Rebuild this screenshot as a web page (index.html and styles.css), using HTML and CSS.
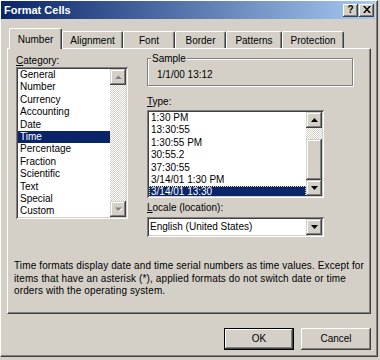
FILE: index.html
```html
<!DOCTYPE html>
<html>
<head>
<meta charset="utf-8">
<title>Format Cells</title>
<link rel="stylesheet" href="styles.css">
</head>
<body>
<div class="window">
  <div class="titlebar">
    <span class="title">Format Cells</span>
    <div class="cbtns">
      <span class="cbtn help">?</span>
      <span class="cbtn close">
        <svg width="8" height="7" viewBox="0 0 8 7"><path d="M0 0h2l2 2.5L6 0h2L5 3.5 8 7H6L4 4.5 2 7H0l3-3.5z" fill="#000"/></svg>
      </span>
    </div>
  </div>
  <div class="content">
    <div class="tabs">
      <div class="tab active t-number">Number</div>
      <div class="tab t-align">Alignment</div>
      <div class="tab t-font">Font</div>
      <div class="tab t-border">Border</div>
      <div class="tab t-patterns">Patterns</div>
      <div class="tab t-protection">Protection</div>
    </div>
    <div class="panel">
      <div class="cols">
        <div class="col-left">
          <div class="label"><u>C</u>ategory:</div>
          <div class="listbox cat-list">
            <div class="items">
              <div class="item">General</div>
              <div class="item">Number</div>
              <div class="item">Currency</div>
              <div class="item">Accounting</div>
              <div class="item">Date</div>
              <div class="item selected">Time</div>
              <div class="item">Percentage</div>
              <div class="item">Fraction</div>
              <div class="item">Scientific</div>
              <div class="item">Text</div>
              <div class="item">Special</div>
              <div class="item">Custom</div>
            </div>
            <div class="vscroll">
              <div class="sbtn">
                <svg width="7" height="5" viewBox="0 0 7 5"><polygon points="1,4 4,1 7,4" fill="#fff"/><polygon points="0,4 3.5,0.5 7,4" fill="#808080"/></svg>
              </div>
              <div class="track"></div>
              <div class="sbtn">
                <svg width="7" height="5" viewBox="0 0 7 5"><polygon points="1,1 8,1 4.5,4.5" fill="#fff"/><polygon points="0,0.5 7,0.5 3.5,4" fill="#808080"/></svg>
              </div>
            </div>
          </div>
        </div>
        <div class="col-right">
          <div class="group">
            <div class="legend">Sample</div>
            <div class="sample-val">1/1/00 13:12</div>
          </div>
          <div class="label type-label"><u>T</u>ype:</div>
          <div class="listbox type-list">
            <div class="items">
              <div class="item">1:30 PM</div>
              <div class="item">13:30:55</div>
              <div class="item">1:30:55 PM</div>
              <div class="item">30:55.2</div>
              <div class="item">37:30:55</div>
              <div class="item">3/14/01 1:30 PM</div>
              <div class="item selected focus">3/14/01 13:30</div>
            </div>
            <div class="vscroll">
              <div class="sbtn">
                <svg width="7" height="4" viewBox="0 0 7 4"><polygon points="0,4 3.5,0 7,4" fill="#000"/></svg>
              </div>
              <div class="track short"></div>
              <div class="thumb"></div>
              <div class="sbtn">
                <svg width="7" height="4" viewBox="0 0 7 4"><polygon points="0,0 7,0 3.5,4" fill="#000"/></svg>
              </div>
            </div>
          </div>
          <div class="label locale-label"><u>L</u>ocale (location):</div>
          <div class="combo">
            <div class="combo-text">English (United States)</div>
            <div class="sbtn">
              <svg width="7" height="4" viewBox="0 0 7 4"><polygon points="0,0 7,0 3.5,4" fill="#000"/></svg>
            </div>
          </div>
        </div>
      </div>
      <p class="desc">Time formats display date and time serial numbers as time values. Except for items that have an asterisk (*), applied formats do not switch date or time orders with the operating system.</p>
    </div>
    <div class="buttons">
      <div class="btn default">OK</div>
      <div class="btn">Cancel</div>
    </div>
  </div>
</div>
</body>
</html>
```

FILE: styles.css
```css
* { box-sizing: border-box; }
html, body { margin: 0; padding: 0; background: #d4d0c8; }
body {
  width: 380px;
  height: 360px;
  overflow: hidden;
  font-family: "Liberation Sans", Arial, sans-serif;
  font-size: 10px;
  color: #000;
}
.window {
  width: 378px;
  height: 357px;
  border-top: 1px solid #fff;
  border-left: 1px solid #fff;
  border-right: 1px solid #404040;
  border-bottom: 1px solid #404040;
  box-shadow: inset -1px -1px #808080;
  padding: 0 2px 2px 0;
  display: flex;
  flex-direction: column;
}
.titlebar {
  height: 18px;
  flex: none;
  background: linear-gradient(to right, #0a246a, #a6caf0);
  display: flex;
  align-items: center;
  justify-content: space-between;
  padding: 0 1px 0 3px;
}
.title { color: #fff; font-weight: bold; font-size: 11px; }
.cbtns { display: flex; gap: 1px; }
.cbtn {
  width: 15px;
  height: 13px;
  background: #d4d0c8;
  box-shadow: inset -1px -1px #404040, inset 1px 1px #fff, inset -2px -2px #808080;
  display: flex;
  align-items: center;
  justify-content: center;
}
.cbtn.help { font-weight: bold; font-size: 10px; line-height: 13px; padding-bottom: 1px; }
.cbtn.close svg { display: block; margin-bottom: 1px; }

.content {
  flex: 1;
  padding: 9px 4px 0 6px;
}
.tabs {
  display: flex;
  align-items: flex-end;
  height: 20px;
  padding-left: 2px;
}
.tab {
  height: 17px;
  border-top: 1px solid #fff;
  border-left: 1px solid #fff;
  border-right: 1px solid #404040;
  box-shadow: inset -1px 0 #808080;
  border-radius: 2px 2px 0 0;
  text-align: center;
  line-height: 12px;
  padding-top: 3px;
  background: #d4d0c8;
}
.tab.active {
  height: 21px;
  margin-bottom: -1px;
  padding-top: 5px;
  position: relative;
  z-index: 1;
}
.t-number { width: 53px; }
.t-align { width: 61px; }
.t-font { width: 52px; }
.t-border { width: 51px; }
.t-patterns { width: 56px; }
.t-protection { width: 62px; }

.panel {
  width: 364px;
  height: 266px;
  border-top: 1px solid #fff;
  border-left: 1px solid #fff;
  border-right: 1px solid #404040;
  border-bottom: 1px solid #404040;
  box-shadow: inset -1px -1px #808080;
  padding: 6px 0 0 6px;
}
.cols { display: flex; gap: 19px; padding-left: 2px; }
.col-left { width: 112px; }
.col-right { width: 207px; }
.label { line-height: 12px; height: 12px; }

.listbox {
  background: #fff;
  box-shadow: inset 1px 1px #808080, inset -1px -1px #fff, inset 2px 2px #404040, inset -2px -2px #d4d0c8;
  padding: 2px;
  display: flex;
}
.items { flex: 1; overflow: hidden; }
.item { line-height: 12.4px; height: 12.4px; padding-left: 2px; white-space: nowrap; }
.item.selected { background: #0a246a; color: #fff; }
.item.focus { outline: 1px dotted #e8e890; outline-offset: -1px; }
.cat-list { height: 152px; }
.type-list { width: 177px; height: 88px; margin-top: 2px; }

.vscroll { width: 16px; display: flex; flex-direction: column; }
.sbtn {
  width: 16px;
  height: 16px;
  flex: none;
  background: #d4d0c8;
  box-shadow: inset -1px -1px #404040, inset 1px 1px #d4d0c8, inset -2px -2px #808080, inset 2px 2px #fff;
  display: flex;
  align-items: center;
  justify-content: center;
}
.sbtn svg { display: block; }
.track {
  flex: 1;
  background-image: repeating-conic-gradient(#fff 0 25%, #d4d0c8 0 50%);
  background-size: 2px 2px;
}
.track.short { flex: none; height: 11px; }
.thumb {
  flex: 1;
  background: #d4d0c8;
  box-shadow: inset -1px -1px #404040, inset 1px 1px #d4d0c8, inset -2px -2px #808080, inset 2px 2px #fff;
}

.group {
  width: 206px;
  height: 28px;
  margin-top: 3px;
  border: 1px solid #808080;
  box-shadow: inset 1px 1px #fff, 1px 1px #fff;
}
.legend {
  width: max-content;
  margin: -6px 0 0 3px;
  padding: 0 1px;
  line-height: 12px;
  background: #d4d0c8;
}
.sample-val { margin: 4px 0 0 9px; line-height: 12px; }
.type-label { margin-top: 10px; }
.locale-label { margin-top: 4px; }

.combo {
  width: 177px;
  height: 20px;
  margin-top: 3px;
  background: #fff;
  box-shadow: inset 1px 1px #808080, inset -1px -1px #fff, inset 2px 2px #404040, inset -2px -2px #d4d0c8;
  padding: 2px;
  display: flex;
}
.combo-text { flex: 1; line-height: 16px; padding-left: 1px; }

.desc {
  margin: 23px 0 0 0;
  width: 356px;
  line-height: 12.5px;
  letter-spacing: 0.12px;
}

.buttons {
  display: flex;
  justify-content: flex-end;
  gap: 7px;
  margin-top: 14px;
}
.btn {
  width: 70px;
  height: 22px;
  background: #d4d0c8;
  box-shadow: inset -1px -1px #404040, inset 1px 1px #fff, inset -2px -2px #808080, inset 2px 2px #d4d0c8;
  text-align: center;
  line-height: 22px;
}
.btn.default {
  box-shadow: inset 0 0 0 1px #000, inset -2px -2px #404040, inset 2px 2px #fff, inset -3px -3px #808080;
}
```
